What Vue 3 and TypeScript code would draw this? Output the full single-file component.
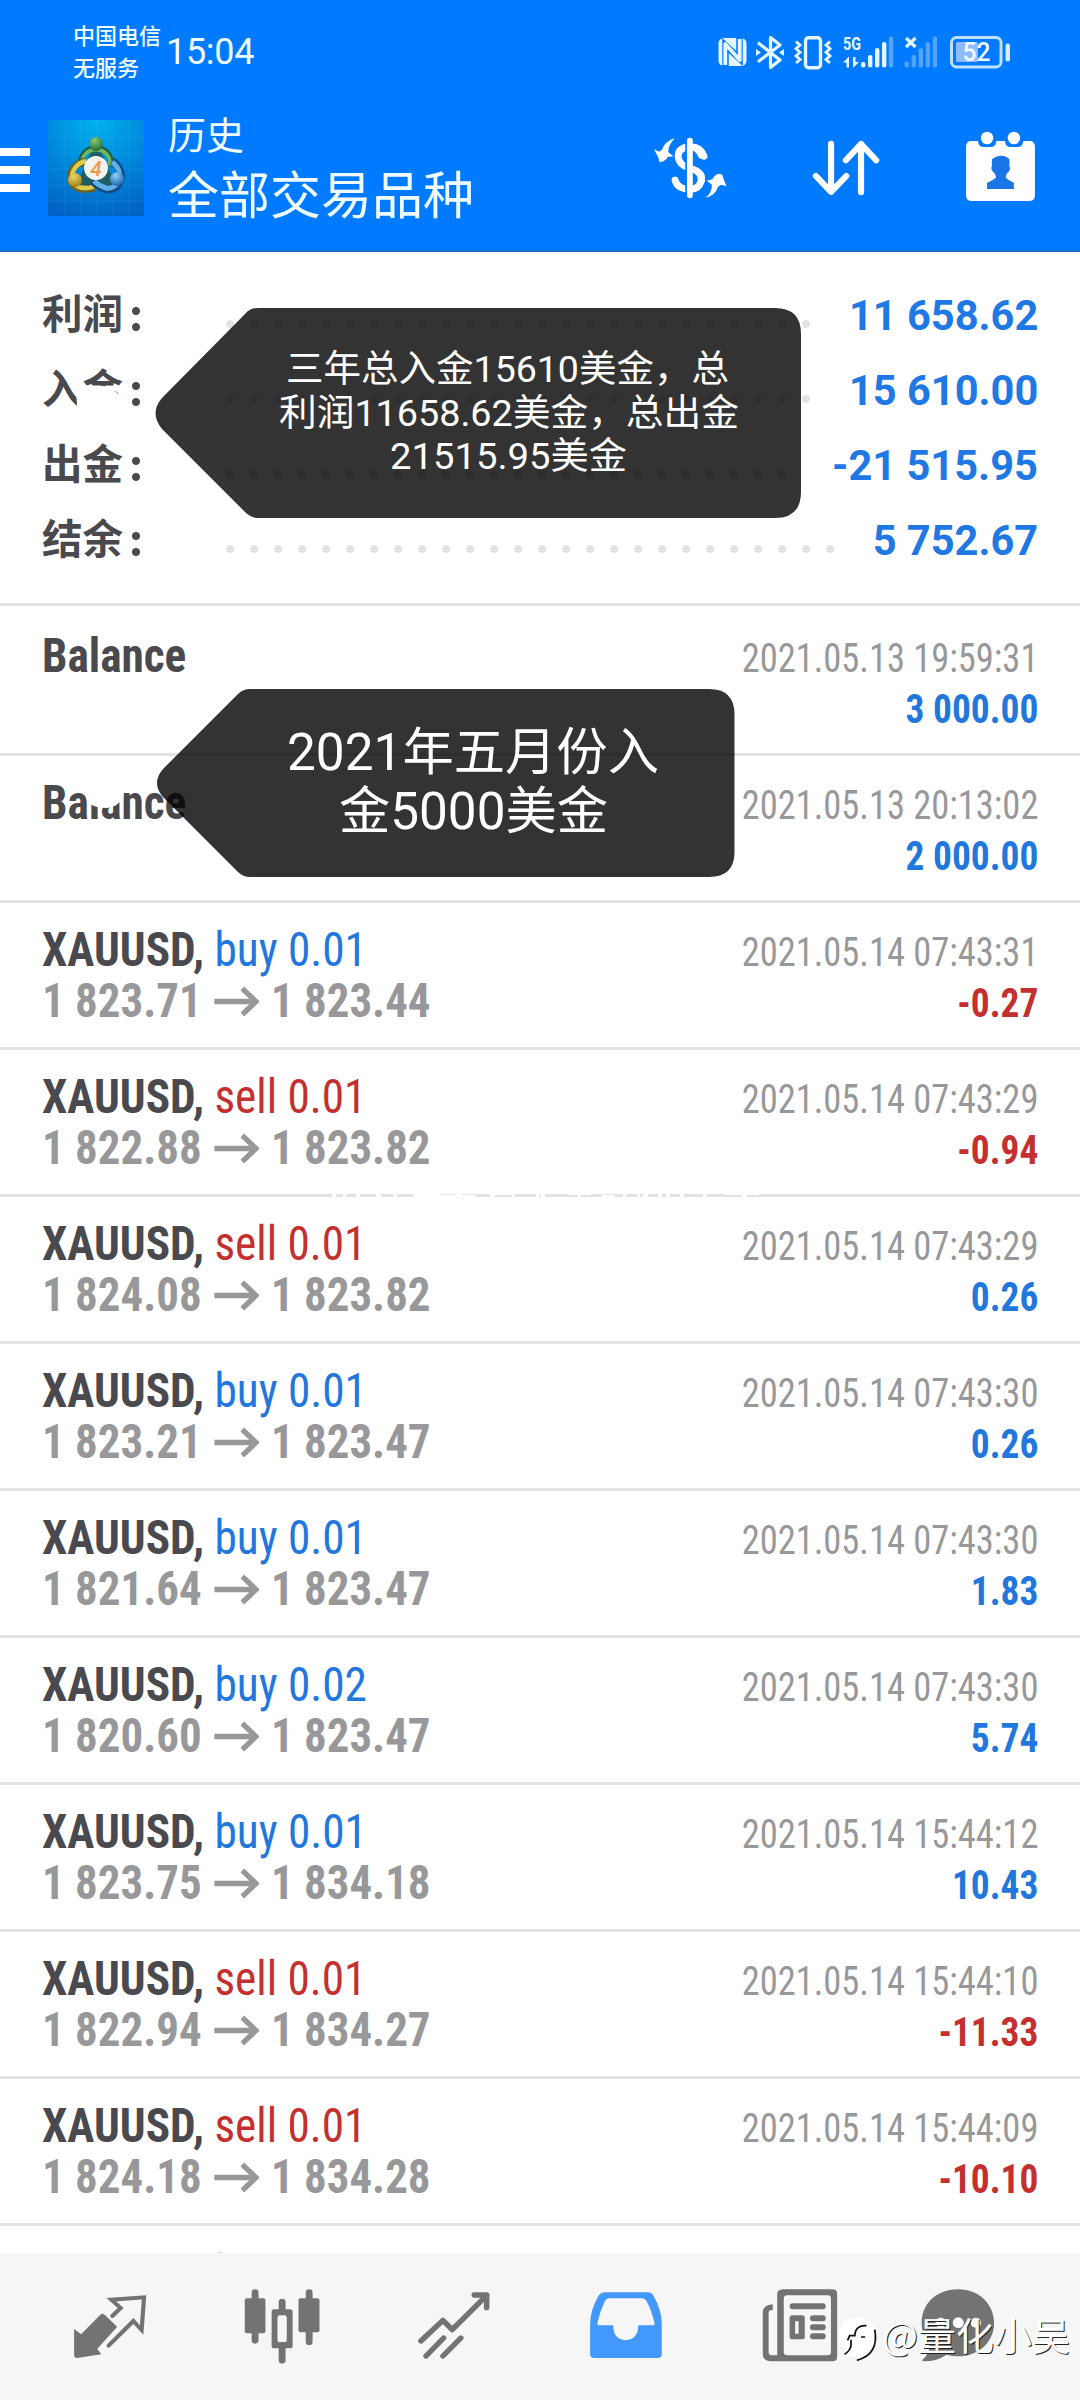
<script setup lang="ts">
interface Summary { label: string; value: string; dots: number }
interface Deal { side?: 'buy' | 'sell'; volume?: string; open?: string; close?: string; time: string; profit: string }

const summary: Summary[] = [
  { label: '利润', value: '11 658.62', dots: 25 },
  { label: '入金', value: '15 610.00', dots: 25 },
  { label: '出金', value: '-21 515.95', dots: 24 },
  { label: '结余', value: '5 752.67', dots: 26 },
]

const deals: Deal[] = [
  { time: '2021.05.13 19:59:31', profit: '3 000.00' },
  { time: '2021.05.13 20:13:02', profit: '2 000.00' },
  { side: 'buy', volume: '0.01', open: '1 823.71', close: '1 823.44', time: '2021.05.14 07:43:31', profit: '-0.27' },
  { side: 'sell', volume: '0.01', open: '1 822.88', close: '1 823.82', time: '2021.05.14 07:43:29', profit: '-0.94' },
  { side: 'sell', volume: '0.01', open: '1 824.08', close: '1 823.82', time: '2021.05.14 07:43:29', profit: '0.26' },
  { side: 'buy', volume: '0.01', open: '1 823.21', close: '1 823.47', time: '2021.05.14 07:43:30', profit: '0.26' },
  { side: 'buy', volume: '0.01', open: '1 821.64', close: '1 823.47', time: '2021.05.14 07:43:30', profit: '1.83' },
  { side: 'buy', volume: '0.02', open: '1 820.60', close: '1 823.47', time: '2021.05.14 07:43:30', profit: '5.74' },
  { side: 'buy', volume: '0.01', open: '1 823.75', close: '1 834.18', time: '2021.05.14 15:44:12', profit: '10.43' },
  { side: 'sell', volume: '0.01', open: '1 822.94', close: '1 834.27', time: '2021.05.14 15:44:10', profit: '-11.33' },
  { side: 'sell', volume: '0.01', open: '1 824.18', close: '1 834.28', time: '2021.05.14 15:44:09', profit: '-10.10' },
  { side: 'buy', volume: '0.01', time: '', profit: '' },
]

// worn-away stretches of one separator: x, width, y offset, height
const gaps = [
  [332, 4, 0, 3], [343, 3, 0, 3], [356, 4, 0, 3], [376, 5, 0, 3], [393, 4, 0, 3], [413, 27, 0, 3],
  [440, 16, 1, 2], [456, 6, 0, 3], [462, 14, 1, 2], [490, 5, 0, 3], [495, 17, 0, 1], [512, 3, 0, 3],
  [536, 4, 0, 3], [541, 4, 0, 3], [568, 10, 0, 1], [578, 3, 0, 3], [581, 10, 0, 1], [602, 3, 0, 3],
  [605, 10, 1, 2], [623, 3, 0, 3], [637, 3, 0, 3], [643, 5, 0, 3], [658, 4, 0, 3], [666, 4, 0, 3],
  [680, 4, 0, 3], [703, 4, 0, 3], [725, 16, 0, 1], [742, 4, 0, 3], [746, 13, 0, 1],
]
</script>

<template>
  <div class="screen">
    <header class="head">
      <div class="status">
        <div class="carrier"><span>中国电信</span><span>无服务</span></div>
        <div class="clock">15:04</div>
        <svg class="sysicons" width="300" height="40" viewBox="715 32 300 40">
          <rect x="718.5" y="38" width="28" height="28" rx="5.5" fill="#e6f6ff" />
          <path d="M725.500 66V45.500L739.500 58.500V38" fill="none" stroke="#007aff" stroke-width="6.500" />
          <path d="M725.300 65V44L739.700 60V39" fill="none" stroke="#e6f6ff" stroke-width="3.800" stroke-linejoin="round" />
          <path d="M759 43.500L780 60L770.500 67.500V37.500L780 45L759 61" fill="none" stroke="#e6f6ff" stroke-width="3.200" stroke-linejoin="round" stroke-linecap="round" />
          <path d="M756 49l5 3.500l-5 3.500zM784 49l-5 3.500l5 3.500z" fill="#e6f6ff" />
          <rect x="805.500" y="37.700" width="15" height="30" rx="3" fill="none" stroke="#e6f6ff" stroke-width="3.400" />
          <path d="M796 41.500l4 3.600l-4 3.600l4 3.600l-4 3.600l4 3.600l-4 3.500M830 41.500l-4 3.600l4 3.600l-4 3.600l4 3.600l-4 3.600l4 3.500" fill="none" stroke="#e6f6ff" stroke-width="2.800" />
          <text x="843" y="50" font-size="18" font-weight="700" textLength="18" lengthAdjust="spacingAndGlyphs" fill="#e6f6ff">5G</text>
          <path d="M843 62.500l6-6v11h-2.500v-5zM859 62l-6 6v-11h2.500v5z" fill="#e6f6ff" />
          <g fill="#e6f6ff">
            <rect x="861" y="62" width="4.400" height="5.500" rx="2" /><rect x="868" y="55" width="4.400" height="12.500" rx="2" />
            <rect x="875" y="48" width="4.400" height="19.500" rx="2" /><rect x="882" y="42" width="4.400" height="25.500" rx="2" />
          </g>
          <g fill="#fff" fill-opacity=".32">
            <rect x="888.800" y="36.500" width="4.400" height="31" rx="2" />
            <rect x="904.500" y="61.500" width="4.400" height="6" rx="2" /><rect x="911.600" y="55" width="4.400" height="12.500" rx="2" />
            <rect x="918.600" y="48" width="4.400" height="19.500" rx="2" /><rect x="925.700" y="42" width="4.400" height="25.500" rx="2" />
            <rect x="932.700" y="36.500" width="4.400" height="31" rx="2" />
          </g>
          <path d="M906 38l9.500 9M915.500 38l-9.500 9" stroke="#e6f6ff" stroke-width="3.200" />
          <rect x="956" y="42" width="22" height="20" rx="1.500" fill="#8fbcff" />
          <rect x="951.500" y="37.500" width="49.500" height="29.500" rx="5" fill="none" stroke="#bfe0ff" stroke-width="3" />
          <rect x="1005.500" y="43.500" width="4.500" height="18" rx="2" fill="#d6ecff" />
          <text x="962.500" y="61" font-size="25.500" font-weight="500" textLength="28" lengthAdjust="spacingAndGlyphs" fill="#f2fbff">52</text>
        </svg>
      </div>
      <div class="bar">
        <div class="menu"><i></i><i></i><i></i></div>
        <svg class="logo" width="96" height="96" viewBox="0 0 96 96">
          <defs>
            <radialGradient id="bg" cx=".5" cy="0" r="1.050"><stop offset="0" stop-color="#00b2ee" /><stop offset=".5" stop-color="#0089dc" /><stop offset="1" stop-color="#0062c4" /></radialGradient>
            <radialGradient id="gg" cx=".4" cy=".25" r=".8"><stop offset="0" stop-color="#8cc77c" /><stop offset="1" stop-color="#176a2d" /></radialGradient>
            <radialGradient id="gy" cx=".4" cy=".25" r=".8"><stop offset="0" stop-color="#ead873" /><stop offset="1" stop-color="#a07c08" /></radialGradient>
            <radialGradient id="gb" cx=".4" cy=".25" r=".8"><stop offset="0" stop-color="#8fd0fa" /><stop offset="1" stop-color="#1560a8" /></radialGradient>
          </defs>
          <rect width="96" height="96" fill="url(#bg)" />
          <path d="M0 17H96M0 33H96M0 49H96M0 65H96M0 81H96M17 0V96M33 0V96M49 0V96M65 0V96M81 0V96" stroke="#5fd0ff" stroke-opacity=".13" stroke-width="1" />
          <path d="M48 20L68 66H28Z" fill="#1d5f63" />
          <g fill="none">
            <path d="M33 47C30 22 66 22 63 47" stroke="#1c5a3c" stroke-width="6" /><path d="M34 46C32 24 64 24 62 46" stroke="#6cb563" stroke-width="4" />
            <path d="M38 41C18 44 16 72 40 69Q46 69 51 64" stroke="#6d6224" stroke-width="7" /><path d="M38 41C20 45 18 70 40 68Q45 68 50 63" stroke="#dccb4a" stroke-width="4.500" />
            <path d="M64 41C80 52 72 72 58 69Q50 67 45 61" stroke="#124a85" stroke-width="8" /><path d="M64 42C78 52 71 70 58 68Q51 66 46 61" stroke="#62b0e6" stroke-width="5" />
          </g>
          <circle cx="48" cy="24" r="7" fill="url(#gg)" /><circle cx="27" cy="60" r="7" fill="url(#gy)" /><circle cx="69" cy="59" r="7" fill="url(#gb)" />
          <circle cx="48" cy="48" r="12" fill="#f4f3f4" />
          <text x="48" y="55.500" text-anchor="middle" font-size="21" font-style="italic" font-weight="500" fill="#f0994a">4</text>
        </svg>
        <div class="titles"><div class="t1">历史</div><div class="t2">全部交易品种</div></div>
        <svg class="actions" width="388" height="75" viewBox="325 390 1126.750 225" preserveAspectRatio="none" fill="#fff">
          <path d="M392 414Q373 432 372 456L387 469L371 471Q362 486 347 487L343 472L331 448L346 455L354 449Q362 424 392 414Z" />
          <path d="M480 594Q500 577 499 554L484 542L500 538Q506 525 518 521Q532 521 531 532L541 559L526 554L517 560Q509 586 480 594Z" />
          <path d="M476 469Q466 440 435 440Q400 443 401 470Q403 495 435 505Q474 516 468 543Q460 570 432 568Q398 566 392 540" fill="none" stroke="#fff" stroke-width="20" stroke-linecap="round" />
          <path d="M435 405V600" stroke="#007aff" stroke-width="27" />
          <path d="M437 440Q458 441 468 466M437 505Q474 516 468 543Q460 567 437 568" fill="none" stroke="#fff" stroke-width="20" stroke-linecap="round" />
          <path d="M435 422V586" stroke="#fff" stroke-width="17" stroke-linecap="round" />
          <path d="M845 431V575M801 528L845 576L889 528M932 577V432M888 481L932 432L976 481" fill="none" stroke="#fff" stroke-width="18" stroke-linecap="round" stroke-linejoin="round" />
          <path d="M1252 423H1272Q1272 441 1290 441H1308Q1324 441 1325 423H1350Q1351 441 1368 441H1386Q1402 441 1403 423H1422Q1437 423 1437 440V586Q1437 603 1422 603H1252Q1237 603 1237 586V440Q1237 423 1252 423Z" />
          <ellipse cx="1298" cy="414" rx="18" ry="19" /><ellipse cx="1376" cy="414" rx="18" ry="19" />
          <path d="M1312 478Q1325 466 1338 467Q1352 466 1363 478V500Q1367 502 1362 514Q1354 520 1352 531Q1354 538 1376 548V567H1298V548Q1322 538 1324 531Q1322 520 1314 514Q1308 502 1312 500Z" fill="#1a75e6" />
        </svg>
      </div>
    </header>

    <section class="summary">
      <div v-for="s in summary" :key="s.label" class="srow">
        <span class="slabel">{{ s.label }}<b class="colon"></b></span>
        <span class="dots" :style="{ width: s.dots * 24 + 'px' }"></span>
        <span class="sval">{{ s.value }}</span>
      </div>
    </section>

    <section class="list">
      <div v-for="(d, i) in deals" :key="i" class="deal" :class="{ first: i === 0 }">
        <div class="left">
          <div v-if="d.side" class="l1"><b>XAUUSD,</b> <span :class="d.side">{{ d.side }} {{ d.volume }}</span></div>
          <div v-else class="l1"><b>Balance</b></div>
          <div v-if="d.open" class="l2">
            <span>{{ d.open }}</span>
            <svg width="48" height="30" viewBox="0 0 48 30"><path d="M0 15.500H44M30 2.500L44.500 15.500L30 28.500" fill="none" stroke="#98989a" stroke-width="5.600" /></svg>
            <span>{{ d.close }}</span>
          </div>
        </div>
        <div class="right">
          <div class="time">{{ d.time }}</div>
          <div class="profit" :class="d.profit.startsWith('-') ? 'sell' : 'buy'">{{ d.profit }}</div>
        </div>
      </div>
    </section>

    <svg class="notes" width="1080" height="2400" viewBox="0 0 1080 2400">
      <path d="M76 392L84 385L96 386Q108 385 112 390L120 390V394L113 390L120 395V387L128 388V417H78Z" fill="#fff" />
      <path d="M85 780H125L123 797Q117 808 107 808Q95 808 88 803L85 795Z" fill="#fff" />
      <rect v-for="(g, i) in gaps" :key="i" :x="g[0]" :y="1194 + g[2]" :width="g[1]" :height="g[3]" fill="#fff" />
      <g fill="#000" fill-opacity=".8">
        <path d="M258 308H775q26 0 26 26V492q0 26 -26 26H258q-7 0 -13 -6L162 429Q149 413 162 398L245 314Q250 308 258 308Z" />
        <path d="M250 689H709q25.500 0 25.500 25.500V852q0 25 -25.500 25H250q-7 0 -12 -5L163 797Q151 783 163 769L238 694Q243 689 250 689Z" />
      </g>
      <g fill="#fff" font-size="37">
        <text x="286" y="382" textLength="443" lengthAdjust="spacingAndGlyphs">三年总入金15610美金，总</text>
        <text x="279" y="426" textLength="460" lengthAdjust="spacingAndGlyphs">利润11658.62美金，总出金</text>
        <text x="390" y="469" textLength="237" lengthAdjust="spacingAndGlyphs">21515.95美金</text>
      </g>
      <g fill="#fff" font-size="51">
        <text x="287" y="770" textLength="372" lengthAdjust="spacingAndGlyphs">2021年五月份入</text>
        <text x="339" y="829" textLength="269" lengthAdjust="spacingAndGlyphs">金5000美金</text>
      </g>
    </svg>

    <nav class="tabs">
      <svg viewBox="203 260 232.300 240" preserveAspectRatio="none">
        <path d="M299 339L340 379L282 446L294 462L224 473Q215 473 215 464V386L235 402L291 343Q296 337 303 343Z" fill="#737373" />
        <path d="M326 347L350 323L323 298L418 291L411 389L387 362L315 436" fill="none" stroke="#737373" stroke-width="12" stroke-linecap="round" />
      </svg>
      <svg viewBox="701 260 232.300 240" preserveAspectRatio="none">
        <path d="M739 277V420M896 277V424M817.500 305V335M817.500 435V480" stroke="#737373" stroke-width="20" stroke-linecap="round" />
        <rect x="709" y="294" width="60" height="105" rx="6" fill="#737373" /><rect x="865" y="294" width="61" height="102" rx="6" fill="#737373" />
        <path fill-rule="evenodd" d="M794 327H841Q848 327 848 335V436Q848 444 841 444H794Q787 444 787 436V335Q787 327 794 327ZM811 345Q804 345 804 352V419Q804 426 811 426H824Q831 426 831 419V352Q831 345 824 345Z" fill="#737373" />
      </svg>
      <svg viewBox="1201 260 232.300 240" preserveAspectRatio="none">
        <path d="M1221 422L1285 360L1312 388L1412 285M1376 284H1412V322M1236 467L1287 413M1285 467L1337 413" fill="none" stroke="#737373" stroke-width="16" stroke-linecap="round" stroke-linejoin="round" />
      </svg>
      <svg viewBox="135 260 232.300 240" preserveAspectRatio="none">
        <path fill-rule="evenodd" d="M190 276H314Q325 276 331 286Q355 330 355 370V460Q355 473 343 473H160Q147 473 147 460V370Q148 328 171 287Q178 276 190 276ZM204 294Q194 294 189 304Q174 336 168 368Q167 375 174 375H214Q214 418 250 420Q286 418 287 375H328Q336 375 334 368Q325 330 311 303Q306 294 298 294Z" fill="#4398fb" />
      </svg>
      <svg class="news" viewBox="639 260 232.300 240" preserveAspectRatio="none">
        <path fill-rule="evenodd" d="M705 267H848Q863 267 863 280V470Q863 483 849 483H668Q647 480 647 460V335Q648 314 676 312V329Q664 328 664 337V455Q664 465 674 465H689V280Q690 268 705 267ZM718 285Q708 285 708 295V456Q708 465 718 465H836Q845 465 845 456V295Q845 285 836 285Z" fill="#737373" />
        <path fill-rule="evenodd" d="M733 345H761Q769 345 769 353V409Q769 417 761 417H733Q725 417 725 409V353Q725 345 733 345ZM741 363V400H751V363Z" fill="#737373" />
        <path d="M734 318H821M793 354H821M793 381H821M793 408H821" stroke="#737373" stroke-width="18" stroke-linecap="round" />
      </svg>
      <svg class="chat" viewBox="1097 260 232.300 240" preserveAspectRatio="none">
        <path d="M1214 267C1275 267 1318 313 1318 368C1318 426 1272 468 1214 468Q1195 468 1180 463Q1150 484 1112 483Q1106 482 1112 476Q1128 462 1131 436C1082 375 1110 267 1214 267Z" fill="#737373" />
        <g fill="#fff"><circle cx="1163" cy="367" r="15" /><circle cx="1214" cy="367" r="16" /><circle cx="1265" cy="367" r="15" /></g>
      </svg>
    </nav>
    <div class="mark">
      <svg width="43" height="50" viewBox="868 352 125 150" preserveAspectRatio="none">
        <path d="M882 374Q925 345 962 374Q990 410 970 450Q955 475 925 488L918 474H880L888 455Q862 430 870 395Z" fill="#fff" />
        <path d="M893 428L899 414H914Q915 382 948 384M903 426V442Q902 458 884 470M932 418H944M972 396Q985 470 920 488" fill="none" stroke="#111" stroke-width="5" />
      </svg>
      <span>@量化小吴</span>
    </div>
  </div>
</template>

<style>
body { margin: 0; background: #fff; }
</style>

<style scoped>
.screen { position: relative; width: 1080px; height: 2400px; overflow: hidden; background: #fff; font-family: Roboto, "Noto Sans CJK SC", sans-serif; display: flex; flex-direction: column; }
.head { height: 252px; flex: none; box-sizing: border-box; background: #007aff; border-bottom: 2px solid #1b6cc9; color: #effcff; }
.status { display: flex; height: 108px; }
.carrier { display: flex; flex-direction: column; width: 93px; padding: 21px 0 0 73px; font-size: 22px; line-height: 31.500px; font-weight: 500; white-space: nowrap; }
.clock { width: 549px; padding-top: 31px; font-size: 36px; line-height: 42px; font-weight: 450; letter-spacing: -.3px; }
.sysicons { margin-top: 32px; }
.bar { display: flex; height: 142px; }
.menu { width: 30px; padding-top: 40px; display: flex; flex-direction: column; gap: 10px; }
.menu i { height: 8px; background: #fff; }
.logo { margin: 12px 0 0 18px; flex: none; }
.titles { width: 484px; padding: 3px 0 0 24px; white-space: nowrap; }
.t1 { font-size: 38px; line-height: 50px; }
.t2 { font-size: 51px; line-height: 71px; }
.actions { margin-top: 22px; flex: none; }
.summary { height: 351px; flex: none; padding: 26px 42px 0 42px; box-sizing: border-box; }
.srow { display: flex; height: 75px; align-items: center; }
.slabel { width: 176px; display: flex; align-items: center; font-size: 40.500px; line-height: 75px; font-weight: 700; color: #4a4a4e; }
.colon { width: 8px; height: 24px; margin: 6px 0 0 9px; background: radial-gradient(circle at 4px 4px, #4a4a4e 3.500px, transparent 4.500px) 0 0 / 8px 16px; }
.dots { height: 8px; margin-top: 16px; background: radial-gradient(circle at 12px 4px, #e3e3e3 3.500px, transparent 4.500px) 0 0 / 24px 8px; }
.sval { margin-left: auto; font-size: 42px; line-height: 75px; font-weight: 700; color: #1f78e4; white-space: nowrap; transform: scaleX(.99); transform-origin: 100% 50%; }
.list { border-top: 3px solid #e3e3e3; }
.deal { display: flex; justify-content: space-between; height: 147px; box-sizing: border-box; padding: 0 42px; border-bottom: 3px solid #e3e3e3; font-stretch: 75%; font-family: "Roboto Condensed", Roboto, sans-serif; white-space: nowrap; }
.deal.first { height: 150px; padding-top: 3px; }
.left { padding-top: 21px; font-size: 48px; line-height: 51px; }
.l1, .l2 { transform: scaleX(.943); transform-origin: 0 50%; }
.l1 b { color: #4a4a4e; }
.l2 { display: flex; font-weight: 700; color: #98989a; transform: scaleX(.936); }
.l2 svg { margin: 11px 13px 0 13px; }
.right { padding-top: 24px; font-size: 40px; line-height: 51px; text-align: right; }
.time { color: #98989a; transform: scaleX(.912); transform-origin: 100% 50%; }
.profit { font-weight: 700; transform: scaleX(.935); transform-origin: 100% 50%; }
.buy { color: #2277dd; }
.sell { color: #c3302f; }
.notes { position: absolute; left: 0; top: 0; font-family: Roboto, "Noto Sans CJK SC", sans-serif; }
.tabs { position: absolute; left: 0; right: 0; top: 2253px; height: 147px; background: #f6f6f6; display: flex; padding-left: 24px; }
.tabs svg { width: 80px; height: 80px; margin: 34px 46px 0; flex: none; }
.tabs .news { margin-left: 48px; }
.tabs .chat { margin-left: 32px; }
.mark { position: absolute; left: 839px; top: 2315px; display: flex; color: #fff; font: 400 38px/38px "Noto Sans CJK SC", sans-serif; text-shadow: 1px 1px 0 #222; white-space: nowrap; }
</style>
